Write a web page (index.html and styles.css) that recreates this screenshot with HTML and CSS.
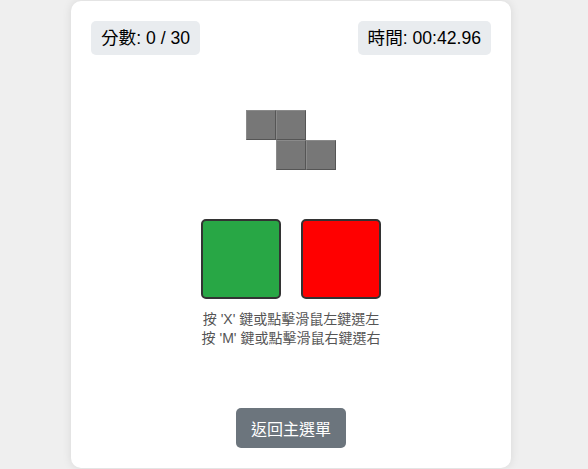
FILE: index.html
```html
<!DOCTYPE html>
<html lang="zh-Hant">
<head>
<meta charset="utf-8">
<title>遊戲</title>
<link rel="stylesheet" href="styles.css">
</head>
<body>
<div class="card">
  <div class="header">
    <div class="badge">分數: 0 / 30</div>
    <div class="badge">時間: 00:42.96</div>
  </div>
  <div class="piece">
    <div class="cell"></div><div class="cell"></div><div class="empty"></div>
    <div class="empty"></div><div class="cell"></div><div class="cell"></div>
  </div>
  <div class="choices">
    <div class="choice green"></div>
    <div class="choice red"></div>
  </div>
  <div class="hint">
    <div>按 'X' 鍵或點擊滑鼠左鍵選左</div>
    <div>按 'M' 鍵或點擊滑鼠右鍵選右</div>
  </div>
  <button class="back">返回主選單</button>
</div>
</body>
</html>
```
FILE: styles.css
```css
html, body {
  margin: 0;
  padding: 0;
}
body {
  background: #efefef;
  font-family: "Liberation Sans", Arial, "Noto Sans CJK TC", sans-serif;
  height: 469px;
  box-sizing: border-box;
  padding-right: 6px;
  display: flex;
  justify-content: center;
  align-items: center;
  overflow: hidden;
}
.card {
  width: 440px;
  height: 467px;
  box-sizing: border-box;
  background: #fff;
  border-radius: 10px;
  box-shadow: 0 0 10px rgba(0, 0, 0, 0.1);
  padding: 20px;
  display: flex;
  flex-direction: column;
  align-items: center;
}
.header {
  align-self: stretch;
  display: flex;
  justify-content: space-between;
}
.badge {
  background: #e9ecef;
  border-radius: 5px;
  padding: 0 10px;
  height: 34px;
  line-height: 34px;
  font-size: 17.6px;
  color: #000;
}
.piece {
  margin-top: 55px;
  display: grid;
  grid-template-columns: repeat(3, 30px);
  grid-template-rows: repeat(2, 30px);
}
.cell {
  box-sizing: border-box;
  background: #777;
  border: 1px solid;
  border-color: #8a8a8a #555 #555 #8a8a8a;
}
.choices {
  margin-top: 49px;
  display: flex;
  gap: 20px;
}
.choice {
  width: 80px;
  height: 80px;
  box-sizing: border-box;
  border: 2px solid #333;
  border-radius: 5px;
}
.green { background: #28a745; }
.red { background: #ff0000; }
.hint {
  margin-top: 11px;
  font-size: 14px;
  line-height: 19px;
  color: #555;
  text-align: center;
}
.back {
  margin-top: 60px;
  background: #6c757d;
  color: #fff;
  border: none;
  border-radius: 5px;
  height: 41px;
  padding: 0 15px;
  font-family: inherit;
  font-size: 16px;
}
```
